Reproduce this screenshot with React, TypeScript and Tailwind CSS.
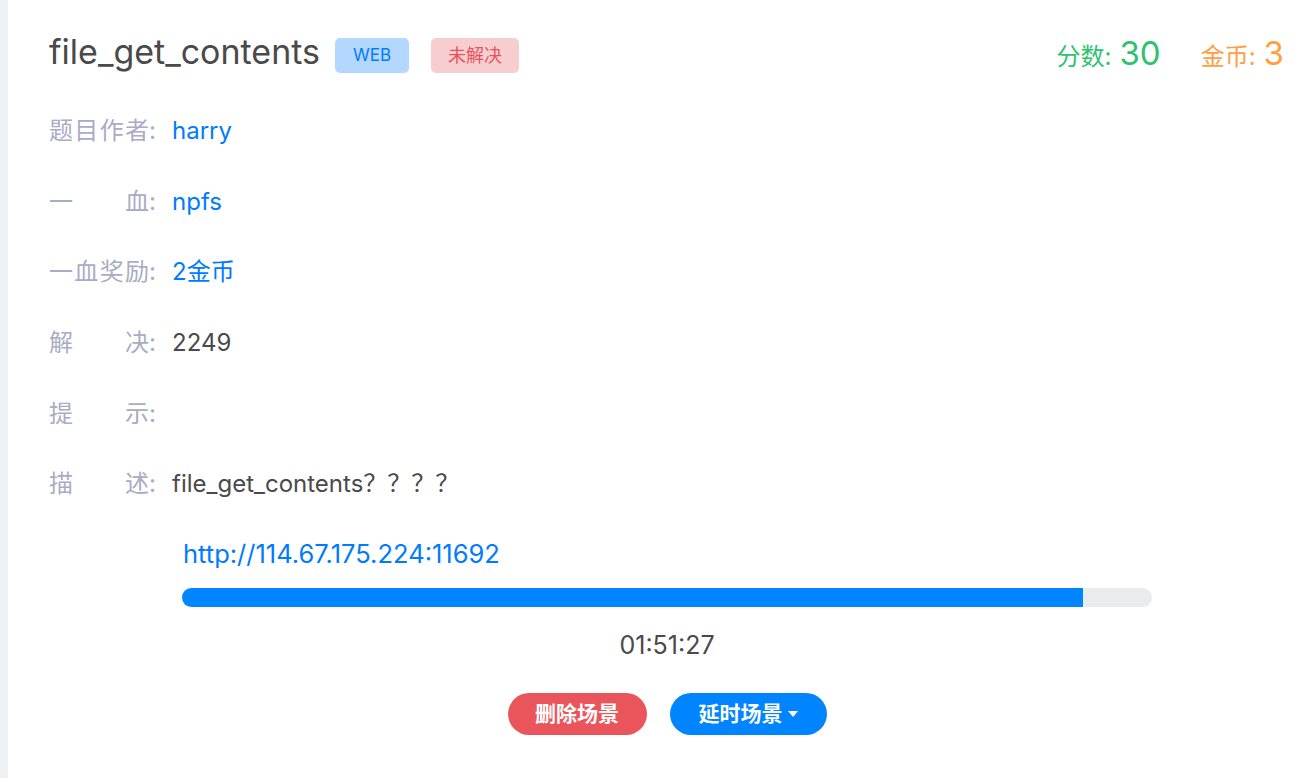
import React from 'react';

const rows: { label: string[]; value: string; color: string }[] = [
  { label: ['题', '目', '作', '者'], value: 'harry', color: 'text-[#007bff]' },
  { label: ['一', '血'], value: 'npfs', color: 'text-[#007bff]' },
  { label: ['一', '血', '奖', '励'], value: '2金币', color: 'text-[#007bff]' },
  { label: ['解', '决'], value: '2249', color: 'text-[#4a4a4a]' },
  { label: ['提', '示'], value: '', color: 'text-[#4a4a4a]' },
  { label: ['描', '述'], value: 'file_get_contents？？？？', color: 'text-[#4a4a4a]' },
];

export default function App() {
  const progress = 92.9;

  return (
    <div
      className="flex min-h-[778px] w-full bg-white"
      style={{ fontFamily: 'Inter, "Noto Sans", "Noto Sans CJK SC", sans-serif' }}
    >
      <div className="w-[8px] shrink-0 bg-[#eef0f3]" />
      <div className="flex-1 pl-[41px] pr-[30px] pt-[30px]">
        {/* header */}
        <div className="flex h-[44px] items-center justify-between">
          <div className="flex h-[44px] items-start">
            <h1 className="text-[34px] leading-[44px] text-[#4a4a4a]">file_get_contents</h1>
            <span className="ml-[15px] mt-[8px] flex h-[35px] w-[74px] items-center justify-center rounded-[5px] bg-[#b3d7ff] text-[17px] text-[#007bff]">
              WEB
            </span>
            <span className="ml-[22px] mt-[8px] flex h-[35px] w-[88px] items-center justify-center rounded-[5px] bg-[#f8cdd0] text-[18px] text-[#e5545c]">
              未解决
            </span>
          </div>
          <div className="flex items-baseline pt-[2px] leading-none">
            <span className="text-[24px] text-[#2ec26f]">分数:</span>
            <span className="ml-[8px] text-[33px] text-[#2ec26f]">30</span>
            <span className="ml-[40px] text-[24px] text-[#ff9f43]">金币:</span>
            <span className="ml-[8px] text-[33px] text-[#ff9f43]">3</span>
          </div>
        </div>

        {/* info rows */}
        <div className="mt-[22px] flex flex-col">
          {rows.map((r, i) => (
            <div key={i} className="flex h-[70.6px] items-center text-[24px]">
              <div className="flex w-[107px] shrink-0 justify-between text-[#a8acc4]">
                {r.label.map((c, j) => (
                  <span key={j}>
                    {c}
                    {j === r.label.length - 1 ? ':' : ''}
                  </span>
                ))}
              </div>
              <span className={`ml-[16px] ${r.color}`}>{r.value}</span>
            </div>
          ))}
        </div>

        {/* scene */}
        <div className="ml-[133px] mt-[18px] w-[970px]">
          <a className="ml-[1px] block text-[25.5px] leading-[32px] text-[#007bff]">
            http://114.67.175.224:11692
          </a>
          <div className="mt-[18px] h-[19px] w-full overflow-hidden rounded-full bg-[#e9ecef]">
            <div className="h-full bg-[#0084ff]" style={{ width: `${progress}%` }} />
          </div>
          <div className="mt-[22px] text-center text-[25px] leading-[32px] text-[#4a4a4a]">01:51:27</div>
          <div className="mt-[32px] flex justify-center gap-[23px]">
            <button className="h-[42px] w-[139px] rounded-full bg-[#e9555a] text-[21px] font-bold text-white">
              删除场景
            </button>
            <button className="flex h-[42px] w-[157px] items-center justify-center rounded-full bg-[#0084ff] text-[21px] font-bold text-white">
              延时场景
              <svg className="ml-[5px]" width="10" height="6" viewBox="0 0 10 6">
                <path d="M0 0h10L5 6z" fill="white" />
              </svg>
            </button>
          </div>
        </div>
      </div>
    </div>
  );
}
